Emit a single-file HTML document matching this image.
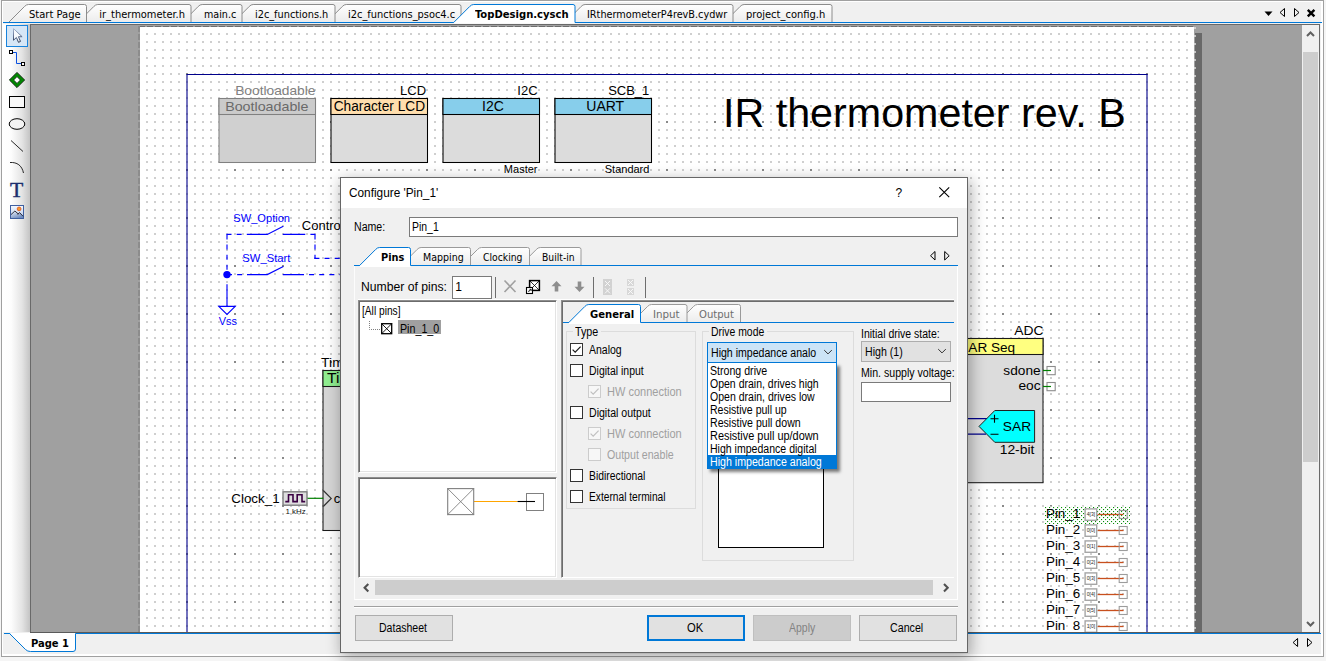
<!DOCTYPE html>
<html lang="en"><head><meta charset="utf-8"><title>PSoC Creator - TopDesign.cysch</title>
<style>
html,body{margin:0;padding:0}
body{width:1326px;height:661px;position:relative;overflow:hidden;background:#f5f5f5;font-family:'Liberation Sans',sans-serif;font-size:11px}
.layer{position:absolute;left:0;top:0;width:1326px;height:661px;overflow:hidden}
.layer div,.layer svg,.layer span{position:absolute;box-sizing:border-box}
.t{white-space:pre;line-height:0;display:block}
svg{overflow:visible}
svg text{white-space:pre}

</style></head>
<body>
<div class="layer" id="workspace">
<div class="frame" style="left:1px;top:0px;width:1323px;height:657px;border:1px solid #a0a0a0;background:#f0f0f0;box-shadow:inset 1px 1px 0 #fff,inset -2px -2px 0 #fff"></div>
<svg id="doctabs" style="left:0;top:0" width="1326" height="24" viewBox="0 0 1326 24">
<defs><linearGradient id="tg" x1="0" y1="0" x2="0" y2="1"><stop offset="0" stop-color="#ffffff"/><stop offset="1" stop-color="#ececec"/></linearGradient></defs>
<path d="M724.6,22 L740.1,6.5 Q741.8,4.5 744.1,4.5 L830.0,4.5 Q832.0,4.5 832.0,6.5 L832.0,22" fill="url(#tg)" stroke="#8c8c8c" stroke-width="1"/>
<path d="M565.6,22 L581.1,6.5 Q582.8,4.5 585.1,4.5 L731.0,4.5 Q733.0,4.5 733.0,6.5 L733.0,22" fill="url(#tg)" stroke="#8c8c8c" stroke-width="1"/>
<path d="M326.8,22 L342.3,6.5 Q344.0,4.5 346.3,4.5 L459.0,4.5 Q461.0,4.5 461.0,6.5 L461.0,22" fill="url(#tg)" stroke="#8c8c8c" stroke-width="1"/>
<path d="M233.7,22 L249.2,6.5 Q250.9,4.5 253.2,4.5 L333.0,4.5 Q335.0,4.5 335.0,6.5 L335.0,22" fill="url(#tg)" stroke="#8c8c8c" stroke-width="1"/>
<path d="M182.7,22 L198.2,6.5 Q199.9,4.5 202.2,4.5 L240.0,4.5 Q242.0,4.5 242.0,6.5 L242.0,22" fill="url(#tg)" stroke="#8c8c8c" stroke-width="1"/>
<path d="M78.3,22 L93.8,6.5 Q95.5,4.5 97.8,4.5 L189.0,4.5 Q191.0,4.5 191.0,6.5 L191.0,22" fill="url(#tg)" stroke="#8c8c8c" stroke-width="1"/>
<path d="M9.0,22 L24.5,6.5 Q26.2,4.5 28.5,4.5 L84.5,4.5 Q86.5,4.5 86.5,6.5 L86.5,22" fill="url(#tg)" stroke="#8c8c8c" stroke-width="1"/>
<rect x="3" y="22" width="1319" height="1" fill="#0078d7"/>
<path d="M453.7,22.5 L469.7,6.5 Q471.4,4.5 473.7,4.5 L573.0,4.5 Q575.0,4.5 575.0,6.5 L575.0,22.5 v1 H453.7 Z" fill="#fff"/>
<path d="M453.7,22.5 L469.7,6.5 Q471.4,4.5 473.7,4.5 L573.0,4.5 Q575.0,4.5 575.0,6.5 L575.0,22.5" fill="none" stroke="#0078d7" stroke-width="1"/>
</svg>
<span class="t" style="left:28.59px;top:15px;font:400 11px/0 'DejaVu Sans Condensed','DejaVu Sans',sans-serif;color:#000;transform:scaleX(1.0080);transform-origin:left center;">Start Page</span>
<span class="t" style="left:99.28px;top:15px;font:400 11px/0 'DejaVu Sans Condensed','DejaVu Sans',sans-serif;color:#000;">ir_thermometer.h</span>
<span class="t" style="left:203.69px;top:15px;font:400 11px/0 'DejaVu Sans Condensed','DejaVu Sans',sans-serif;color:#000;transform:scaleX(0.9679);transform-origin:left center;">main.c</span>
<span class="t" style="left:254.69px;top:15px;font:400 11px/0 'DejaVu Sans Condensed','DejaVu Sans',sans-serif;color:#000;transform:scaleX(0.9840);transform-origin:left center;">i2c_functions.h</span>
<span class="t" style="left:347.79px;top:15px;font:400 11px/0 'DejaVu Sans Condensed','DejaVu Sans',sans-serif;color:#000;transform:scaleX(0.9941);transform-origin:left center;">i2c_functions_psoc4.c</span>
<span class="t" style="left:474.69px;top:15px;font:700 11px/0 'DejaVu Sans Condensed','DejaVu Sans',sans-serif;color:#000;transform:scaleX(1.0134);transform-origin:left center;">TopDesign.cysch</span>
<span class="t" style="left:586.58px;top:15px;font:400 11px/0 'DejaVu Sans Condensed','DejaVu Sans',sans-serif;color:#000;transform:scaleX(0.9802);transform-origin:left center;">IRthermometerP4revB.cydwr</span>
<span class="t" style="left:745.58px;top:15px;font:400 11px/0 'DejaVu Sans Condensed','DejaVu Sans',sans-serif;color:#000;transform:scaleX(1.0045);transform-origin:left center;">project_config.h</span>
<svg id="tabbtns" style="left:1260px;top:4px" width="60" height="18" viewBox="1260 4 60 18"><path d="M1264.5,11.5 h8 l-4,4.5 z" fill="#000"/><path d="M1284.5,8.5 v8 l-4.5,-4 z" fill="none" stroke="#000" stroke-width="1"/><path d="M1294.5,8.5 v8 l4.5,-4 z" fill="none" stroke="#000" stroke-width="1"/><path d="M1307.8,9.8 l6.6,6.6 M1314.4,9.8 l-6.6,6.6" fill="none" stroke="#000" stroke-width="2.4"/></svg>
<div class="toolbar" style="left:3px;top:24px;width:27px;height:608px;background:linear-gradient(90deg,#ffffff 0%,#fdfdfd 30%,#e4e4e4 70%,#c4c4c4 100%)"></div>
<div style="left:6px;top:25px;width:22px;height:22px;border:1px solid #1883dc;background:#d6e6f6"></div>
<svg id="tools" style="left:3px;top:24px" width="27" height="200" viewBox="3 24 27 200"><defs><linearGradient id="pg" x1="0" y1="0" x2="0" y2="1"><stop offset="0" stop-color="#a9b8d2"/><stop offset="0.6" stop-color="#5a6a8a"/><stop offset="1" stop-color="#26344f"/></linearGradient></defs><path d="M13.5,28.6 v11.6 l2.9,-2.7 l2.1,4.8 l2,-0.9 l-2.1,-4.7 h3.7 z" fill="#f7fafd" stroke="url(#pg)" stroke-width="1"/><path d="M12.5,52.5 H16.5 V63.5 H21.5" fill="none" stroke="#0a50e0" stroke-width="1"/><rect x="9.5" y="50.5" width="3" height="3" fill="#fff" stroke="#000"/><rect x="21.5" y="62.5" width="3" height="3" fill="#fff" stroke="#000"/><path d="M17,72.4 l7.6,7.6 l-7.6,7.6 l-7.6,-7.6 z" fill="#008a00" stroke="#0a1a0a" stroke-width="0.9"/><path d="M17,76.6 l3.4,3.4 l-3.4,3.4 l-3.4,-3.4 z" fill="#fff" stroke="#0a1a0a" stroke-width="0.8"/><rect x="9.5" y="96.5" width="15" height="11" fill="#f8f8f8" stroke="#000"/><ellipse cx="17" cy="124" rx="7.8" ry="5.3" fill="#f4f4f4" stroke="#000"/><path d="M11,140.5 l12,11" stroke="#111" fill="none" stroke-width="0.9"/><path d="M10,162.5 c7,-0.5 12,3 13.5,10.5" stroke="#111" fill="none" stroke-width="0.9"/><defs><linearGradient id="ig" x1="0" y1="0" x2="0" y2="1"><stop offset="0" stop-color="#f4f8fe"/><stop offset="1" stop-color="#b4c8ea"/></linearGradient><linearGradient id="mg" x1="0" y1="0" x2="0.6" y2="1"><stop offset="0" stop-color="#f2f5fb"/><stop offset="1" stop-color="#6f8cc0"/></linearGradient></defs><rect x="10.5" y="205.5" width="13" height="13" fill="url(#ig)" stroke="#3f5f9f"/><path d="M11,218 V214.6 L14.9,211 L18.3,214 L19.6,212.6 L23,216 V218 z" fill="url(#mg)"/><path d="M11,214.6 L14.9,211 L18.3,214 M17.6,214.4 L19.6,212.6 L23,216.2" fill="none" stroke="#1c1c2a" stroke-width="0.9"/><circle cx="19.1" cy="208.9" r="1.9" fill="#f59a2a" stroke="#e0501a" stroke-width="0.8"/></svg>
<span class="t" style="left:9.83px;top:190px;font:400 21px/0 'Liberation Serif',serif;color:#1c2f6e;transform:scaleX(1.0312);transform-origin:left center;-webkit-text-stroke:0.45px #1c2f6e;">T</span>
<div class="canvas" style="left:30px;top:24px;width:1290px;height:609px;background:#a0a0a0;border:1px solid #696969"></div>
<div style="left:1195px;top:33px;width:7px;height:599px;background:#696969"></div>
<div class="page" style="left:140px;top:27px;width:1054px;height:605px;background-color:#fff;background-image:radial-gradient(circle at 1px 1px,#8a8a8a 0.8px,rgba(138,138,138,0) 1.25px),radial-gradient(circle at 1px 1px,#cfcfcf 0.9px,rgba(207,207,207,0) 1.3px);background-size:48px 48px,8px 8px;background-position:46px 46px,6px 6px"></div>
<div style="left:139px;top:26px;width:1055px;height:1px;background:repeating-linear-gradient(90deg,#6e6e6e 0,#6e6e6e 6px,rgba(0,0,0,0) 6px,rgba(0,0,0,0) 8px)"></div>
<div style="left:138px;top:26px;width:2px;height:606px;background:repeating-linear-gradient(180deg,#8c8c8c 0,#8c8c8c 6px,rgba(0,0,0,0) 6px,rgba(0,0,0,0) 8px)"></div>
<div style="left:1194px;top:27px;width:2px;height:605px;background:repeating-linear-gradient(180deg,rgba(255,255,255,0) 0,rgba(255,255,255,0) 0.5px,rgba(225,225,225,0.75) 0.5px,rgba(225,225,225,0.75) 2.5px,rgba(255,255,255,0) 2.5px,rgba(255,255,255,0) 8px)"></div>
<div style="left:1302px;top:25px;width:17px;height:607px;background:#f0f0f0"></div>
<div style="left:1303px;top:52px;width:15px;height:410px;background:#cdcdcd"></div>
<svg style="left:1302px;top:25px" width="17" height="607" viewBox="1302 25 17 607"><path d="M1307,36 l3.5,-3.5 l3.5,3.5" fill="none" stroke="#606060" stroke-width="2"/><path d="M1307,622 l3.5,3.5 l3.5,-3.5" fill="none" stroke="#606060" stroke-width="2"/></svg>
<div style="left:30px;top:632px;width:1290px;height:1px;background:#5a5a5a"></div>
<div style="left:4px;top:633px;width:1317px;height:1px;background:#0078d7"></div>
<svg style="left:0;top:630px" width="1326" height="26" viewBox="0 630 1326 26"><path d="M9.5,633 l16.5,16.5 q2,2 5,2 h42 q2.5,0 2.5,-2.5 v-16 z" fill="#fff"/><path d="M4,633.5 h5.5 l16,16 q2,2 5,2 h42.5 q2.5,0 2.5,-2.5 v-15.5" fill="none" stroke="#0078d7" stroke-width="1"/><path d="M1297.6,638.5 v8 l-4.5,-4 z" fill="none" stroke="#000"/><path d="M1307.5,638.5 v8 l4.5,-4 z" fill="none" stroke="#000"/></svg>
<span class="t" style="left:30.59px;top:644px;font:700 11px/0 'DejaVu Sans Condensed','DejaVu Sans',sans-serif;color:#000;transform:scaleX(1.0074);transform-origin:left center;">Page 1</span>
</div><div class="layer" id="schematic" style="left:140px;top:27px;width:1055px;height:605px">
<svg style="left:0;top:0" width="1055" height="605" viewBox="140 27 1055 605" font-family="'Liberation Sans',sans-serif">
<defs><pattern id="selpat" x="1045" y="507" width="4" height="4" patternUnits="userSpaceOnUse"><rect width="4" height="4" fill="#fff"/><rect x="0" y="0" width="1.1" height="1.1" fill="#089008"/><rect x="2" y="2" width="1.1" height="1.1" fill="#089008"/></pattern></defs>
<path d="M187,640 V74.5 M1147,74.5 V640" fill="none" stroke="#00008b" stroke-opacity="0.55" stroke-width="2"/>
<path d="M186.6,74.5 H1147.6" fill="none" stroke="#00008b" stroke-width="1.2"/>
<rect x="219.0" y="98.5" width="96.5" height="64" fill="#d0d0d0" stroke="#808080" stroke-width="1.05"/><rect x="219.0" y="98.5" width="96.5" height="16" fill="#cbcbcb" stroke="#808080" stroke-width="1.05"/>
<rect x="331.0" y="98.5" width="96.5" height="64" fill="#dcdcdc" stroke="#000" stroke-width="1.05"/><rect x="331.0" y="98.5" width="96.5" height="16" fill="#ffdead" stroke="#000" stroke-width="1.05"/>
<rect x="443.0" y="98.5" width="96.5" height="64" fill="#dcdcdc" stroke="#000" stroke-width="1.05"/><rect x="443.0" y="98.5" width="96.5" height="16" fill="#87ceeb" stroke="#000" stroke-width="1.05"/>
<rect x="555.0" y="98.5" width="96.5" height="64" fill="#dcdcdc" stroke="#000" stroke-width="1.05"/><rect x="555.0" y="98.5" width="96.5" height="16" fill="#87ceeb" stroke="#000" stroke-width="1.05"/>
<text x="315.45" y="94.6" font-size="13" fill="#808080" text-anchor="end" textLength="80.26" lengthAdjust="spacingAndGlyphs">Bootloadable</text>
<text x="266.8" y="111" font-size="13.5" fill="#696969" text-anchor="middle" textLength="83.29" lengthAdjust="spacingAndGlyphs">Bootloadable</text>
<text x="426.05" y="94.6" font-size="13" fill="#000" text-anchor="end">LCD</text>
<text x="379.4" y="111" font-size="14" fill="#000" text-anchor="middle" textLength="91.32" lengthAdjust="spacingAndGlyphs">Character LCD</text>
<text x="537.55" y="94.6" font-size="13" fill="#000" text-anchor="end">I2C</text>
<text x="493" y="111" font-size="14" fill="#000" text-anchor="middle">I2C</text>
<text x="649.35" y="94.6" font-size="13" fill="#000" text-anchor="end">SCB_1</text>
<text x="605.2" y="111" font-size="14" fill="#000" text-anchor="middle">UART</text>
<text x="537.51" y="173" font-size="11" fill="#000" text-anchor="end" textLength="33.64" lengthAdjust="spacingAndGlyphs">Master</text>
<text x="649.42" y="173" font-size="11" fill="#000" text-anchor="end" textLength="44.64" lengthAdjust="spacingAndGlyphs">Standard</text>
<text x="722.98" y="126.8" font-size="40" fill="#000" text-anchor="start" textLength="402.74" lengthAdjust="spacingAndGlyphs">IR thermometer rev. B</text>
<g fill="none" stroke="#0000ff" stroke-width="1.15"><g stroke-dasharray="5,5.15"><path d="M226.5,234.4 H247"/><path d="M227,234.4 V270"/><path d="M315.4,234.4 H304"/><path d="M315,234.4 V258.8"/><path d="M314.4,258.3 H345"/><path d="M227,274.6 H247"/><path d="M304,274.6 H345" stroke-dashoffset="5.1"/></g><path d="M247,234.4 H267.3 L283.3,226.2 M282.8,234.4 H304"/><path d="M247,274.6 H267.3 L283.3,266.4 M282.8,274.6 H304"/><path d="M227,284.2 V306.3"/><path d="M218.8,306.4 H235.2 L227,314.4 Z"/></g>
<circle cx="227" cy="274.6" r="3.7" fill="#0000ff"/>
<text x="233.36" y="222" font-size="11" fill="#0000ff" text-anchor="start" textLength="56.64" lengthAdjust="spacingAndGlyphs">SW_Option</text>
<text x="242.36" y="262" font-size="11" fill="#0000ff" text-anchor="start" textLength="48.14" lengthAdjust="spacingAndGlyphs">SW_Start</text>
<text x="218.66" y="324.5" font-size="11" fill="#0000ff" text-anchor="start" textLength="18.24" lengthAdjust="spacingAndGlyphs">Vss</text>
<text x="301.83" y="230" font-size="13" fill="#000" text-anchor="start">Control_Reg</text>
<rect x="323.0" y="370.5" width="120" height="160" fill="#d6d6d6" stroke="#1a1a1a" stroke-width="1.05"/><rect x="323.0" y="370.5" width="120" height="16" fill="#90ee90" stroke="#1a1a1a" stroke-width="1.05"/>
<text x="321.13" y="367" font-size="13" fill="#000" text-anchor="start" textLength="50.26" lengthAdjust="spacingAndGlyphs">Timer_1</text>
<text x="327.02" y="383" font-size="14" fill="#000" text-anchor="start" textLength="39.32" lengthAdjust="spacingAndGlyphs">Timer</text>
<path d="M323.3,490.5 L331.2,498.4 L323.3,506.5" fill="none" stroke="#303030" stroke-width="1.2"/>
<text x="333.73" y="502.5" font-size="13" fill="#000" text-anchor="start">clock</text>
<text x="231.33" y="502.5" font-size="13" fill="#000" text-anchor="start" textLength="48.26" lengthAdjust="spacingAndGlyphs">Clock_1</text>
<rect x="283" y="491.8" width="24" height="13.4" fill="#dedede" stroke="#7d7d7d" stroke-width="1.4"/>
<path d="M285.3,501.6 H288.5 V494.8 H293 V501.6 H297.2 V494.8 H302 V501.6 H305.2" fill="none" stroke="#3a0042" stroke-width="1.6"/>
<path d="M307.6,498.3 H323.3" stroke="#008000" stroke-width="1.2" fill="none"/>
<text x="285.5" y="513.7" font-size="7.5" fill="#111" text-anchor="start" textLength="20.24" lengthAdjust="spacingAndGlyphs">1 kHz</text>
<rect x="900.0" y="338.5" width="143" height="144.2" fill="#dcdcdc" stroke="#1a1a1a" stroke-width="1.05"/><rect x="900.0" y="338.5" width="143" height="16" fill="#ffff80" stroke="#1a1a1a" stroke-width="1.05"/>
<text x="1043.64" y="334.5" font-size="13" fill="#000" text-anchor="end" textLength="29.26" lengthAdjust="spacingAndGlyphs">ADC</text>
<text x="1015.18" y="351.6" font-size="13.6" fill="#000" text-anchor="end">ADC SAR Seq</text>
<text x="1040.64" y="374.5" font-size="13" fill="#000" text-anchor="end" textLength="37.26" lengthAdjust="spacingAndGlyphs">sdone</text>
<text x="1040.64" y="390.2" font-size="13" fill="#000" text-anchor="end" textLength="22.16" lengthAdjust="spacingAndGlyphs">eoc</text>
<rect x="1047" y="366.5" width="8.2" height="8.2" fill="#fff" stroke="#8c8c8c" stroke-width="1.1"/>
<path d="M1043,370.5 H1051" stroke="#008000" stroke-width="1.2"/>
<rect x="1047" y="382.5" width="8.2" height="8.2" fill="#fff" stroke="#8c8c8c" stroke-width="1.1"/>
<path d="M1043,386.5 H1051" stroke="#008000" stroke-width="1.2"/>
<path d="M940,418.7 H988 M940,434.2 H986" stroke="#00008b" stroke-width="1.2"/>
<path d="M979,426.4 L994.8,410.5 H1034.6 V442.3 H994.8 Z" fill="#00ffff" stroke="#202020" stroke-width="1"/>
<text x="1002.83" y="431" font-size="13" fill="#000" text-anchor="start" textLength="28.26" lengthAdjust="spacingAndGlyphs">SAR</text>
<path d="M990.5,418.7 h8 M994.5,414.7 v8 M990.5,434.2 h8" stroke="#000" stroke-width="1.1"/>
<text x="1034.44" y="453.6" font-size="13" fill="#000" text-anchor="end" textLength="34.76" lengthAdjust="spacingAndGlyphs">12-bit</text>
<rect x="1044.5" y="506.5" width="85.5" height="17.5" fill="url(#selpat)"/>
<text x="1045.93" y="518" font-size="13" fill="#000" text-anchor="start" textLength="34.36" lengthAdjust="spacingAndGlyphs">Pin_1</text>
<path d="M1097.5,514.5 H1123.5" stroke="#c8501e" stroke-width="1.3"/>
<rect x="1085.1" y="508.9" width="11.6" height="11.4" fill="#fff" stroke="#a6a6a6" stroke-width="1.4"/>
<rect x="1119.2" y="510.5" width="8" height="8" fill="none" stroke="#9c9c9c" stroke-width="1.1"/>
<text x="1091" y="516.4" font-size="5.2" fill="#2a2a2a" text-anchor="middle" textLength="8.5" lengthAdjust="spacingAndGlyphs">4[3]</text>
<text x="1045.93" y="534" font-size="13" fill="#000" text-anchor="start" textLength="34.36" lengthAdjust="spacingAndGlyphs">Pin_2</text>
<path d="M1097.5,530.5 H1123.5" stroke="#c8501e" stroke-width="1.3"/>
<rect x="1085.1" y="524.9" width="11.6" height="11.4" fill="#fff" stroke="#a6a6a6" stroke-width="1.4"/>
<rect x="1119.2" y="526.5" width="8" height="8" fill="none" stroke="#9c9c9c" stroke-width="1.1"/>
<text x="1091" y="532.4" font-size="5.2" fill="#2a2a2a" text-anchor="middle" textLength="8.5" lengthAdjust="spacingAndGlyphs">0[0]</text>
<text x="1045.93" y="550" font-size="13" fill="#000" text-anchor="start" textLength="34.36" lengthAdjust="spacingAndGlyphs">Pin_3</text>
<path d="M1097.5,546.5 H1123.5" stroke="#c8501e" stroke-width="1.3"/>
<rect x="1085.1" y="540.9" width="11.6" height="11.4" fill="#fff" stroke="#a6a6a6" stroke-width="1.4"/>
<rect x="1119.2" y="542.5" width="8" height="8" fill="none" stroke="#9c9c9c" stroke-width="1.1"/>
<text x="1091" y="548.4" font-size="5.2" fill="#2a2a2a" text-anchor="middle" textLength="8.5" lengthAdjust="spacingAndGlyphs">0[1]</text>
<text x="1045.93" y="566" font-size="13" fill="#000" text-anchor="start" textLength="34.36" lengthAdjust="spacingAndGlyphs">Pin_4</text>
<path d="M1097.5,562.5 H1123.5" stroke="#c8501e" stroke-width="1.3"/>
<rect x="1085.1" y="556.9" width="11.6" height="11.4" fill="#fff" stroke="#a6a6a6" stroke-width="1.4"/>
<rect x="1119.2" y="558.5" width="8" height="8" fill="none" stroke="#9c9c9c" stroke-width="1.1"/>
<text x="1091" y="564.4" font-size="5.2" fill="#2a2a2a" text-anchor="middle" textLength="8.5" lengthAdjust="spacingAndGlyphs">0[2]</text>
<text x="1045.93" y="582" font-size="13" fill="#000" text-anchor="start" textLength="34.36" lengthAdjust="spacingAndGlyphs">Pin_5</text>
<path d="M1097.5,578.5 H1123.5" stroke="#c8501e" stroke-width="1.3"/>
<rect x="1085.1" y="572.9" width="11.6" height="11.4" fill="#fff" stroke="#a6a6a6" stroke-width="1.4"/>
<rect x="1119.2" y="574.5" width="8" height="8" fill="none" stroke="#9c9c9c" stroke-width="1.1"/>
<text x="1091" y="580.4" font-size="5.2" fill="#2a2a2a" text-anchor="middle" textLength="8.5" lengthAdjust="spacingAndGlyphs">0[3]</text>
<text x="1045.93" y="598" font-size="13" fill="#000" text-anchor="start" textLength="34.36" lengthAdjust="spacingAndGlyphs">Pin_6</text>
<path d="M1097.5,594.5 H1123.5" stroke="#c8501e" stroke-width="1.3"/>
<rect x="1085.1" y="588.9" width="11.6" height="11.4" fill="#fff" stroke="#a6a6a6" stroke-width="1.4"/>
<rect x="1119.2" y="590.5" width="8" height="8" fill="none" stroke="#9c9c9c" stroke-width="1.1"/>
<text x="1091" y="596.4" font-size="5.2" fill="#2a2a2a" text-anchor="middle" textLength="8.5" lengthAdjust="spacingAndGlyphs">0[4]</text>
<text x="1045.93" y="614" font-size="13" fill="#000" text-anchor="start" textLength="34.36" lengthAdjust="spacingAndGlyphs">Pin_7</text>
<path d="M1097.5,610.5 H1123.5" stroke="#c8501e" stroke-width="1.3"/>
<rect x="1085.1" y="604.9" width="11.6" height="11.4" fill="#fff" stroke="#a6a6a6" stroke-width="1.4"/>
<rect x="1119.2" y="606.5" width="8" height="8" fill="none" stroke="#9c9c9c" stroke-width="1.1"/>
<text x="1091" y="612.4" font-size="5.2" fill="#2a2a2a" text-anchor="middle" textLength="8.5" lengthAdjust="spacingAndGlyphs">0[5]</text>
<text x="1045.93" y="630" font-size="13" fill="#000" text-anchor="start" textLength="34.36" lengthAdjust="spacingAndGlyphs">Pin_8</text>
<path d="M1097.5,626.5 H1123.5" stroke="#c8501e" stroke-width="1.3"/>
<rect x="1085.1" y="620.9" width="11.6" height="11.4" fill="#fff" stroke="#a6a6a6" stroke-width="1.4"/>
<rect x="1119.2" y="622.5" width="8" height="8" fill="none" stroke="#9c9c9c" stroke-width="1.1"/>
<text x="1091" y="628.4" font-size="5.2" fill="#2a2a2a" text-anchor="middle" textLength="8.5" lengthAdjust="spacingAndGlyphs">1[0]</text>
</svg>
</div><div class="layer" id="dialog">
<div class="window" style="left:340px;top:177px;width:628px;height:476px;background:#f0f0f0;border:1px solid #666;box-shadow:2px 4px 14px 1px rgba(0,0,0,0.32)"></div>
<div class="titlebar" style="left:341px;top:178px;width:626px;height:30px;background:#fff"></div>
<span class="t" style="left:348.82px;top:193px;font:400 12px/0 'Liberation Sans',sans-serif;color:#000;transform:scaleX(0.9841);transform-origin:left center;">Configure &#x27;Pin_1&#x27;</span>
<span class="t" style="left:895.42px;top:193px;font:400 12px/0 'Liberation Sans',sans-serif;color:#000;">?</span>
<svg style="left:938px;top:186px" width="12" height="12" viewBox="938 186 12 12"><path d="M939.3,187.3 L949.2,197.2 M949.2,187.3 L939.3,197.2" stroke="#000" stroke-width="1.1" fill="none"/></svg>
<span class="t" style="left:353.72px;top:227px;font:400 12px/0 'Liberation Sans',sans-serif;color:#000;transform:scaleX(0.8828);transform-origin:left center;">Name:</span>
<div class="edit" style="left:409px;top:217px;width:549px;height:20px;background:#fff;border:1px solid #7a7a7a"></div>
<span class="t" style="left:411.52px;top:227px;font:400 12px/0 'Liberation Sans',sans-serif;color:#000;transform:scaleX(0.8697);transform-origin:left center;">Pin_1</span>
<div class="tabpage" style="left:354px;top:266px;width:604px;height:334px;background:#f0f0f0;border-left:1px solid #fcfcfc;border-right:1px solid #fff;border-bottom:1px solid #fff"></div>
<svg style="left:340px;top:240px" width="628" height="28" viewBox="340 240 628 28">
<defs><linearGradient id="tg2" x1="0" y1="0" x2="0" y2="1"><stop offset="0" stop-color="#ffffff"/><stop offset="1" stop-color="#ececec"/></linearGradient></defs>
<path d="M520.8,265 L536.3,249.5 Q538.0,247.5 540.3,247.5 L579.0,247.5 Q581.0,247.5 581.0,249.5 L581.0,265" fill="url(#tg2)" stroke="#9a9a9a"/>
<path d="M462.0,265 L477.5,249.5 Q479.2,247.5 481.5,247.5 L527.5,247.5 Q529.5,247.5 529.5,249.5 L529.5,265" fill="url(#tg2)" stroke="#9a9a9a"/>
<path d="M401.6,265 L417.1,249.5 Q418.8,247.5 421.1,247.5 L468.5,247.5 Q470.5,247.5 470.5,249.5 L470.5,265" fill="url(#tg2)" stroke="#9a9a9a"/>
<rect x="354" y="265" width="604" height="1" fill="#0078d7"/>
<path d="M359.6,265.5 L375.6,249.5 Q377.3,247.5 379.6,247.5 L408.5,247.5 Q410.5,247.5 410.5,249.5 L410.5,265.5 v1.5 H359.6 Z" fill="#fff"/>
<path d="M354,265.5 H359.6" stroke="#0078d7"/><path d="M359.6,265.5 L375.6,249.5 Q377.3,247.5 379.6,247.5 L408.5,247.5 Q410.5,247.5 410.5,249.5 L410.5,265.5" fill="none" stroke="#0078d7"/>
<path d="M935,251.5 v8.5 l-4.5,-4.25 z M944.7,251.5 v8.5 l4.5,-4.25 z" fill="none" stroke="#000"/>
</svg>
<span class="t" style="left:380.59px;top:258px;font:700 11px/0 'DejaVu Sans Condensed','DejaVu Sans',sans-serif;color:#000;transform:scaleX(0.9894);transform-origin:left center;">Pins</span>
<span class="t" style="left:422.59px;top:258px;font:400 11px/0 'DejaVu Sans Condensed','DejaVu Sans',sans-serif;color:#000;transform:scaleX(0.9567);transform-origin:left center;">Mapping</span>
<span class="t" style="left:482.99px;top:258px;font:400 11px/0 'DejaVu Sans Condensed','DejaVu Sans',sans-serif;color:#000;transform:scaleX(0.9346);transform-origin:left center;">Clocking</span>
<span class="t" style="left:541.78px;top:258px;font:400 11px/0 'DejaVu Sans Condensed','DejaVu Sans',sans-serif;color:#000;transform:scaleX(0.9314);transform-origin:left center;">Built-in</span>
<span class="t" style="left:360.52px;top:287px;font:400 12px/0 'Liberation Sans',sans-serif;color:#000;transform:scaleX(1.0153);transform-origin:left center;">Number of pins:</span>
<div class="edit" style="left:452px;top:276px;width:40px;height:23px;background:#fff;border:1px solid #7a7a7a"></div>
<span class="t" style="left:455.22px;top:287px;font:400 12px/0 'Liberation Sans',sans-serif;color:#000;">1</span>
<svg style="left:494px;top:274px" width="156" height="26" viewBox="494 274 156 26"><path d="M495.5,277 V298 M593.5,277 V298 M645.5,277 V298" stroke="#6e6e6e" stroke-width="1"/><path d="M504.5,280.5 L515.5,292 M515.5,280.5 L504.5,292" stroke="#a0a0a0" stroke-width="1.6" fill="none"/><rect x="529.6" y="280.6" width="9.8" height="9.8" fill="#fff" stroke="#000" stroke-width="1.5"/><path d="M530,281 l9,9 M539,281 l-9,9" stroke="#000" stroke-width="0.8"/><rect x="526.5" y="287.5" width="6" height="6" fill="#fff" stroke="#000" stroke-width="1.1"/><path d="M528.6,292 q0.2,-2 2.2,-2.2 M529.6,289.3 h1.6 v1.6" stroke="#000" stroke-width="0.9" fill="none"/><path d="M556.5,281 l5,5.2 h-3.2 v5.3 h-3.6 v-5.3 h-3.2 z" fill="#8e8e8e"/><path d="M579.5,292 l5,-5.2 h-3.2 v-5.3 h-3.6 v5.3 h-3.2 z" fill="#8e8e8e"/><rect x="603" y="279" width="9" height="16" fill="#d2d2d2"/><rect x="627" y="279" width="7" height="7" fill="#d8d8d8"/><rect x="627" y="288" width="7" height="7" fill="#d8d8d8"/><g stroke="#fbfbfb" stroke-width="0.9" fill="none"><path d="M605,281 l5,5 M610,281 l-5,5 M605,288.3 l5,5 M610,288.3 l-5,5"/><path d="M628,280 l5,5 M633,280 l-5,5 M628,289 l5,5 M633,289 l-5,5"/></g></svg>
<div style="left:358px;top:299px;width:596px;height:1px;background:#fff"></div>
<div style="left:358px;top:300px;width:199px;height:173px;background:#fff;border-top:1px solid #8e8e8e;border-left:1px solid #8e8e8e;border-right:1px solid #fff;border-bottom:1px solid #fff;box-shadow:inset 1px 1px 0 #6c6c6c,inset -1px -1px 0 #e3e3e3"></div>
<span class="t" style="left:362.22px;top:311px;font:400 12px/0 'Liberation Sans',sans-serif;color:#000;transform:scaleX(0.8488);transform-origin:left center;">[All pins]</span>
<svg style="left:366px;top:318px" width="30" height="18" viewBox="366 318 30 18"><path d="M369.5,321 V329.5 H380" stroke="#808080" stroke-width="1" stroke-dasharray="1,1" fill="none"/><rect x="381.7" y="323.7" width="10" height="10" fill="#fff" stroke="#000" stroke-width="1.3"/><path d="M381.7,323.7 l10,10 M391.7,323.7 l-10,10" stroke="#000" stroke-width="0.9"/></svg>
<div style="left:398px;top:320px;width:43px;height:14px;background:#a0a0a0"></div>
<span class="t" style="left:399.72px;top:328.5px;font:400 12px/0 'Liberation Sans',sans-serif;color:#000;transform:scaleX(0.8900);transform-origin:left center;">Pin_1_0</span>
<div style="left:358px;top:477px;width:199px;height:101px;background:#fff;border-top:1px solid #8e8e8e;border-left:1px solid #8e8e8e;border-right:1px solid #fff;border-bottom:1px solid #fff;box-shadow:inset 1px 1px 0 #6c6c6c,inset -1px -1px 0 #e3e3e3"></div>
<svg style="left:440px;top:484px" width="110" height="36" viewBox="440 484 110 36"><path d="M474,501.5 H517.5" stroke="#ffa500" stroke-width="1.1"/><rect x="526.5" y="493.5" width="17" height="17" fill="#fff" stroke="#808080"/><path d="M517.5,501.5 H535" stroke="#000" stroke-width="1.1"/><rect x="447.7" y="488.6" width="26" height="26" fill="#fff" stroke="#808080" stroke-width="1.1"/><path d="M447.7,488.6 l26,26 M473.7,488.6 l-26,26" stroke="#808080" stroke-width="0.9"/></svg>
<div class="proppanel" style="left:561px;top:300px;width:393px;height:278px;background:#f0f0f0;border-top:1px solid #8e8e8e;border-left:1px solid #8e8e8e;border-bottom:1px solid #fff;box-shadow:inset 1px 1px 0 #6c6c6c"></div>
<svg style="left:561px;top:300px" width="398" height="26" viewBox="561 300 398 26">
<path d="M678.0,322 L693.5,306.5 Q695.2,304.5 697.5,304.5 L738.5,304.5 Q740.5,304.5 740.5,306.5 L740.5,322" fill="url(#tg2)" stroke="#9a9a9a"/>
<path d="M632.0,322 L647.5,306.5 Q649.2,304.5 651.5,304.5 L685.0,304.5 Q687.0,304.5 687.0,306.5 L687.0,322" fill="url(#tg2)" stroke="#9a9a9a"/>
<rect x="563" y="322" width="391" height="1" fill="#0078d7"/>
<path d="M568.8,322.5 L584.8,306.5 Q586.5,304.5 588.8,304.5 L638.5,304.5 Q640.5,304.5 640.5,306.5 L640.5,322.5 v1.5 H568.8 Z" fill="#fff"/>
<path d="M563,322.5 H568.8" stroke="#0078d7"/><path d="M568.8,322.5 L584.8,306.5 Q586.5,304.5 588.8,304.5 L638.5,304.5 Q640.5,304.5 640.5,306.5 L640.5,322.5" fill="none" stroke="#0078d7"/>
</svg>
<span class="t" style="left:589.78px;top:315px;font:700 11px/0 'DejaVu Sans Condensed','DejaVu Sans',sans-serif;color:#000;transform:scaleX(1.0137);transform-origin:left center;">General</span>
<span class="t" style="left:652.99px;top:315px;font:400 11px/0 'DejaVu Sans Condensed','DejaVu Sans',sans-serif;color:#6d6d6d;transform:scaleX(1.0391);transform-origin:left center;">Input</span>
<span class="t" style="left:698.99px;top:315px;font:400 11px/0 'DejaVu Sans Condensed','DejaVu Sans',sans-serif;color:#6d6d6d;transform:scaleX(1.0165);transform-origin:left center;">Output</span>
<div class="group" style="left:566px;top:331px;width:130px;height:178px;border:1px solid #dcdcdc"></div>
<div style="left:573px;top:326px;width:28px;height:12px;background:#f0f0f0"></div>
<span class="t" style="left:575.02px;top:332px;font:400 12px/0 'Liberation Sans',sans-serif;color:#000;transform:scaleX(0.8918);transform-origin:left center;">Type</span>
<div class="cb" style="left:570px;top:343px;width:13px;height:13px;border:1px solid #333;background:#fff"><svg style="left:0;top:0" width="11" height="11" viewBox="0 0 11 11"><path d="M1.6,5.6 L4.2,8.2 L9.6,2.6" fill="none" stroke="#1a1a1a" stroke-width="1.2"/></svg></div>
<span class="t" style="left:588.72px;top:350px;font:400 12px/0 'Liberation Sans',sans-serif;color:#000;transform:scaleX(0.8750);transform-origin:left center;">Analog</span>
<div class="cb" style="left:570px;top:364px;width:13px;height:13px;border:1px solid #333;background:#fff"></div>
<span class="t" style="left:588.72px;top:371px;font:400 12px/0 'Liberation Sans',sans-serif;color:#000;transform:scaleX(0.8724);transform-origin:left center;">Digital input</span>
<div class="cb" style="left:588px;top:385px;width:13px;height:13px;border:1px solid #cccccc;background:#f7f7f7"><svg style="left:0;top:0" width="11" height="11" viewBox="0 0 11 11"><path d="M1.6,5.6 L4.2,8.2 L9.6,2.6" fill="none" stroke="#c0c0c0" stroke-width="1.2"/></svg></div>
<span class="t" style="left:606.72px;top:392px;font:400 12px/0 'Liberation Sans',sans-serif;color:#a0a0a0;transform:scaleX(0.9180);transform-origin:left center;">HW connection</span>
<div class="cb" style="left:570px;top:406px;width:13px;height:13px;border:1px solid #333;background:#fff"></div>
<span class="t" style="left:588.72px;top:413px;font:400 12px/0 'Liberation Sans',sans-serif;color:#000;transform:scaleX(0.8809);transform-origin:left center;">Digital output</span>
<div class="cb" style="left:588px;top:427px;width:13px;height:13px;border:1px solid #cccccc;background:#f7f7f7"><svg style="left:0;top:0" width="11" height="11" viewBox="0 0 11 11"><path d="M1.6,5.6 L4.2,8.2 L9.6,2.6" fill="none" stroke="#c0c0c0" stroke-width="1.2"/></svg></div>
<span class="t" style="left:606.72px;top:434px;font:400 12px/0 'Liberation Sans',sans-serif;color:#a0a0a0;transform:scaleX(0.9180);transform-origin:left center;">HW connection</span>
<div class="cb" style="left:588px;top:448px;width:13px;height:13px;border:1px solid #cccccc;background:#f7f7f7"></div>
<span class="t" style="left:606.72px;top:455px;font:400 12px/0 'Liberation Sans',sans-serif;color:#a0a0a0;transform:scaleX(0.8846);transform-origin:left center;">Output enable</span>
<div class="cb" style="left:570px;top:469px;width:13px;height:13px;border:1px solid #333;background:#fff"></div>
<span class="t" style="left:588.72px;top:476px;font:400 12px/0 'Liberation Sans',sans-serif;color:#000;transform:scaleX(0.8627);transform-origin:left center;">Bidirectional</span>
<div class="cb" style="left:570px;top:490px;width:13px;height:13px;border:1px solid #333;background:#fff"></div>
<span class="t" style="left:588.72px;top:497px;font:400 12px/0 'Liberation Sans',sans-serif;color:#000;transform:scaleX(0.8496);transform-origin:left center;">External terminal</span>
<div class="group" style="left:702px;top:331px;width:152px;height:230px;border:1px solid #dcdcdc"></div>
<div style="left:709px;top:326px;width:58px;height:12px;background:#f0f0f0"></div>
<span class="t" style="left:710.72px;top:332px;font:400 12px/0 'Liberation Sans',sans-serif;color:#000;transform:scaleX(0.8671);transform-origin:left center;">Drive mode</span>
<div class="picture" style="left:718px;top:366px;width:106px;height:182px;background:#fff;border:1px solid #000"></div>
<div class="combo" style="left:707px;top:342px;width:130px;height:21px;background:#cce4f7;border:1px solid #0078d7"></div>
<span class="t" style="left:710.72px;top:353px;font:400 12px/0 'Liberation Sans',sans-serif;color:#000;transform:scaleX(0.8809);transform-origin:left center;">High impedance analo</span>
<svg style="left:823.1px;top:348.4px" width="10" height="8" viewBox="-5 -4 10 8"><path d="M-3.8,-1.9 L0,1.9 L3.8,-1.9" fill="none" stroke="#333" stroke-width="1"/></svg>
<div class="droplist" style="left:707px;top:363px;width:130px;height:106px;background:#fff;border:1px solid #0078d7;border-top:0;box-shadow:3px 3px 3px rgba(0,0,0,0.5)"></div>
<div style="left:708px;top:455px;width:128px;height:14px;background:#0078d7"></div>
<span class="t" style="left:709.82px;top:371px;font:400 12px/0 'Liberation Sans',sans-serif;color:#000;transform:scaleX(0.8841);transform-origin:left center;">Strong drive</span>
<span class="t" style="left:709.82px;top:384px;font:400 12px/0 'Liberation Sans',sans-serif;color:#000;transform:scaleX(0.8761);transform-origin:left center;">Open drain, drives high</span>
<span class="t" style="left:709.82px;top:397px;font:400 12px/0 'Liberation Sans',sans-serif;color:#000;transform:scaleX(0.8770);transform-origin:left center;">Open drain, drives low</span>
<span class="t" style="left:709.82px;top:410px;font:400 12px/0 'Liberation Sans',sans-serif;color:#000;transform:scaleX(0.8778);transform-origin:left center;">Resistive pull up</span>
<span class="t" style="left:709.82px;top:423px;font:400 12px/0 'Liberation Sans',sans-serif;color:#000;transform:scaleX(0.8830);transform-origin:left center;">Resistive pull down</span>
<span class="t" style="left:709.82px;top:436px;font:400 12px/0 'Liberation Sans',sans-serif;color:#000;transform:scaleX(0.9104);transform-origin:left center;">Resistive pull up/down</span>
<span class="t" style="left:709.82px;top:449px;font:400 12px/0 'Liberation Sans',sans-serif;color:#000;transform:scaleX(0.8789);transform-origin:left center;">High impedance digital</span>
<span class="t" style="left:709.82px;top:462px;font:400 12px/0 'Liberation Sans',sans-serif;color:#fff;transform:scaleX(0.8859);transform-origin:left center;">High impedance analog</span>
<span class="t" style="left:860.72px;top:334px;font:400 12px/0 'Liberation Sans',sans-serif;color:#000;transform:scaleX(0.8740);transform-origin:left center;">Initial drive state:</span>
<div class="combo" style="left:861px;top:341px;width:90px;height:21px;background:#e1e1e1;border:1px solid #adadad"></div>
<span class="t" style="left:864.52px;top:352px;font:400 12px/0 'Liberation Sans',sans-serif;color:#000;transform:scaleX(0.8832);transform-origin:left center;">High (1)</span>
<svg style="left:937.2px;top:347.2px" width="10" height="8" viewBox="-5 -4 10 8"><path d="M-3.8,-1.9 L0,1.9 L3.8,-1.9" fill="none" stroke="#333" stroke-width="1"/></svg>
<span class="t" style="left:860.72px;top:373px;font:400 12px/0 'Liberation Sans',sans-serif;color:#000;transform:scaleX(0.8835);transform-origin:left center;">Min. supply voltage:</span>
<div class="edit" style="left:861px;top:382px;width:90px;height:20px;background:#fff;border:1px solid #7a7a7a"></div>
<div style="left:358px;top:580px;width:597px;height:16px;background:#f0f0f0"></div>
<div style="left:375px;top:580px;width:558px;height:15px;background:#cdcdcd"></div>
<svg style="left:358px;top:580px" width="600" height="16" viewBox="358 580 600 16"><path d="M368.3,584 l-3.7,3.7 l3.7,3.7 M944,584 l3.7,3.7 l-3.7,3.7" fill="none" stroke="#505050" stroke-width="2.1"/></svg>
<div style="left:354px;top:606px;width:604px;height:2px;border-top:1px solid #a0a0a0;border-bottom:1px solid #fff"></div>
<div class="btn" style="left:355px;top:615px;width:98px;height:26px;background:#e1e1e1;border:1px solid #adadad"></div>
<span class="t" style="left:378.72px;top:628px;font:400 12px/0 'Liberation Sans',sans-serif;color:#000;transform:scaleX(0.8775);transform-origin:left center;">Datasheet</span>
<div class="btn" style="left:647px;top:615px;width:98px;height:26px;background:#e1e1e1;border:2px solid #0078d7"></div>
<span class="t" style="left:687.02px;top:628px;font:400 12px/0 'Liberation Sans',sans-serif;color:#000;transform:scaleX(0.9342);transform-origin:left center;">OK</span>
<div class="btn" style="left:753px;top:615px;width:98px;height:26px;background:#cccccc;border:1px solid #bfbfbf"></div>
<span class="t" style="left:789.22px;top:628px;font:400 12px/0 'Liberation Sans',sans-serif;color:#838383;transform:scaleX(0.8725);transform-origin:left center;">Apply</span>
<div class="btn" style="left:859px;top:615px;width:98px;height:26px;background:#e1e1e1;border:1px solid #adadad"></div>
<span class="t" style="left:890.02px;top:628px;font:400 12px/0 'Liberation Sans',sans-serif;color:#000;transform:scaleX(0.8887);transform-origin:left center;">Cancel</span>
</div>
</body></html>
